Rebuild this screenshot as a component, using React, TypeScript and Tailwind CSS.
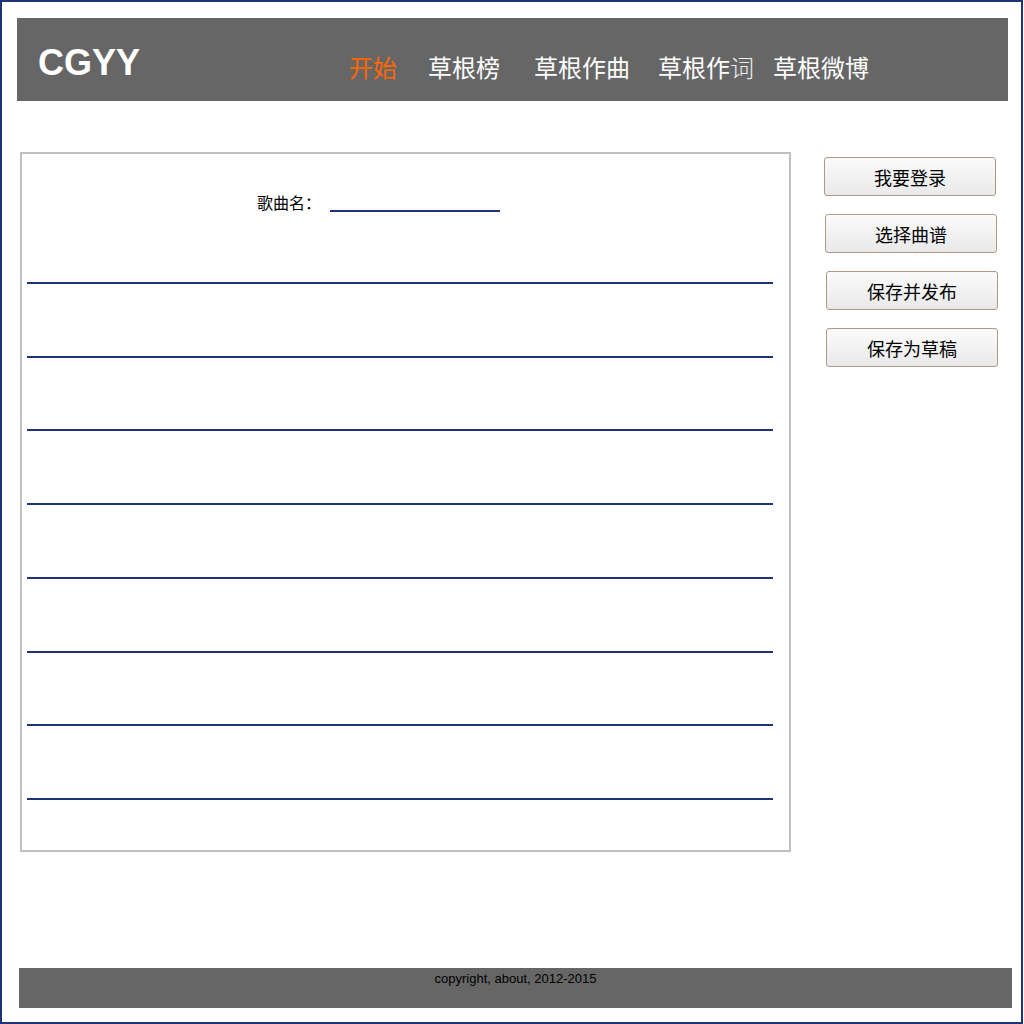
import React from "react";

const NAVY = "bg-[#1f3379]";

function Line({ mt }: { mt: string }) {
  return <div className={`${mt} ml-[5px] w-[746px] h-[2px] bg-[#1f3379]`} />;
}

function Btn({ label, cls }: { label: string; cls: string }) {
  return (
    <button
      className={`${cls} w-[172px] h-[39px] rounded-[3px] border border-[#a89b8c] bg-gradient-to-b from-[#fbfbfb] to-[#e9e9e9] text-[18px] leading-[26px] text-black font-['Noto_Sans_CJK_SC',sans-serif] flex items-center justify-center`}
    >
      {label}
    </button>
  );
}

export default function App() {
  return (
    <div className="w-[1023px] h-[1024px] border-2 border-[#1f3379] bg-white font-['Noto_Sans_CJK_SC',sans-serif] overflow-hidden">
      <div className="ml-[15px] mt-[16px] w-[991px] h-[83px] bg-[#666666] flex items-start pl-[21px]">
        <div className="w-[311px] mt-[27px] text-[36px] leading-[36px] font-bold text-white font-['Liberation_Sans',Arial,sans-serif]">
          CGYY
        </div>
        <nav className="flex mt-[31px] text-[24px] leading-[36px] text-white">
          <span className="text-[#ff6600]">开始</span>
          <span className="ml-[31px]">草根榜</span>
          <span className="ml-[34px]">草根作曲</span>
          <span className="ml-[28px]">
            草根作<span className="font-light text-[#eeeeee]">词</span>
          </span>
          <span className="ml-[19px]">草根微博</span>
        </nav>
      </div>

      <div className="flex mt-[51px]">
        <div className="ml-[18px] w-[771px] h-[700px] border-2 border-[#c0c0c0]">
          <div className="pt-[36px] pl-[235px] flex items-end">
            <span className="text-[16px] leading-[24px] text-black">歌曲名：</span>
            <span className={`ml-[9px] w-[170px] h-[2px] mb-[2px] ${NAVY}`} />
          </div>
          <Line mt="mt-[68px]" />
          <Line mt="mt-[72px]" />
          <Line mt="mt-[71px]" />
          <Line mt="mt-[72px]" />
          <Line mt="mt-[72px]" />
          <Line mt="mt-[72px]" />
          <Line mt="mt-[71px]" />
          <Line mt="mt-[72px]" />
        </div>
        <div className="ml-[33px] pt-[5px] flex flex-col">
          <Btn label="我要登录" cls="" />
          <Btn label="选择曲谱" cls="mt-[18px] ml-[1px]" />
          <Btn label="保存并发布" cls="mt-[18px] ml-[2px]" />
          <Btn label="保存为草稿" cls="mt-[18px] ml-[2px]" />
        </div>
      </div>

      <div className="ml-[17px] mt-[116px] w-[993px] h-[40px] bg-[#666666] text-center pt-[2px] text-[13px] leading-[18px] text-black font-['Liberation_Sans',Arial,sans-serif]">
        copyright, about, 2012-2015
      </div>
    </div>
  );
}
